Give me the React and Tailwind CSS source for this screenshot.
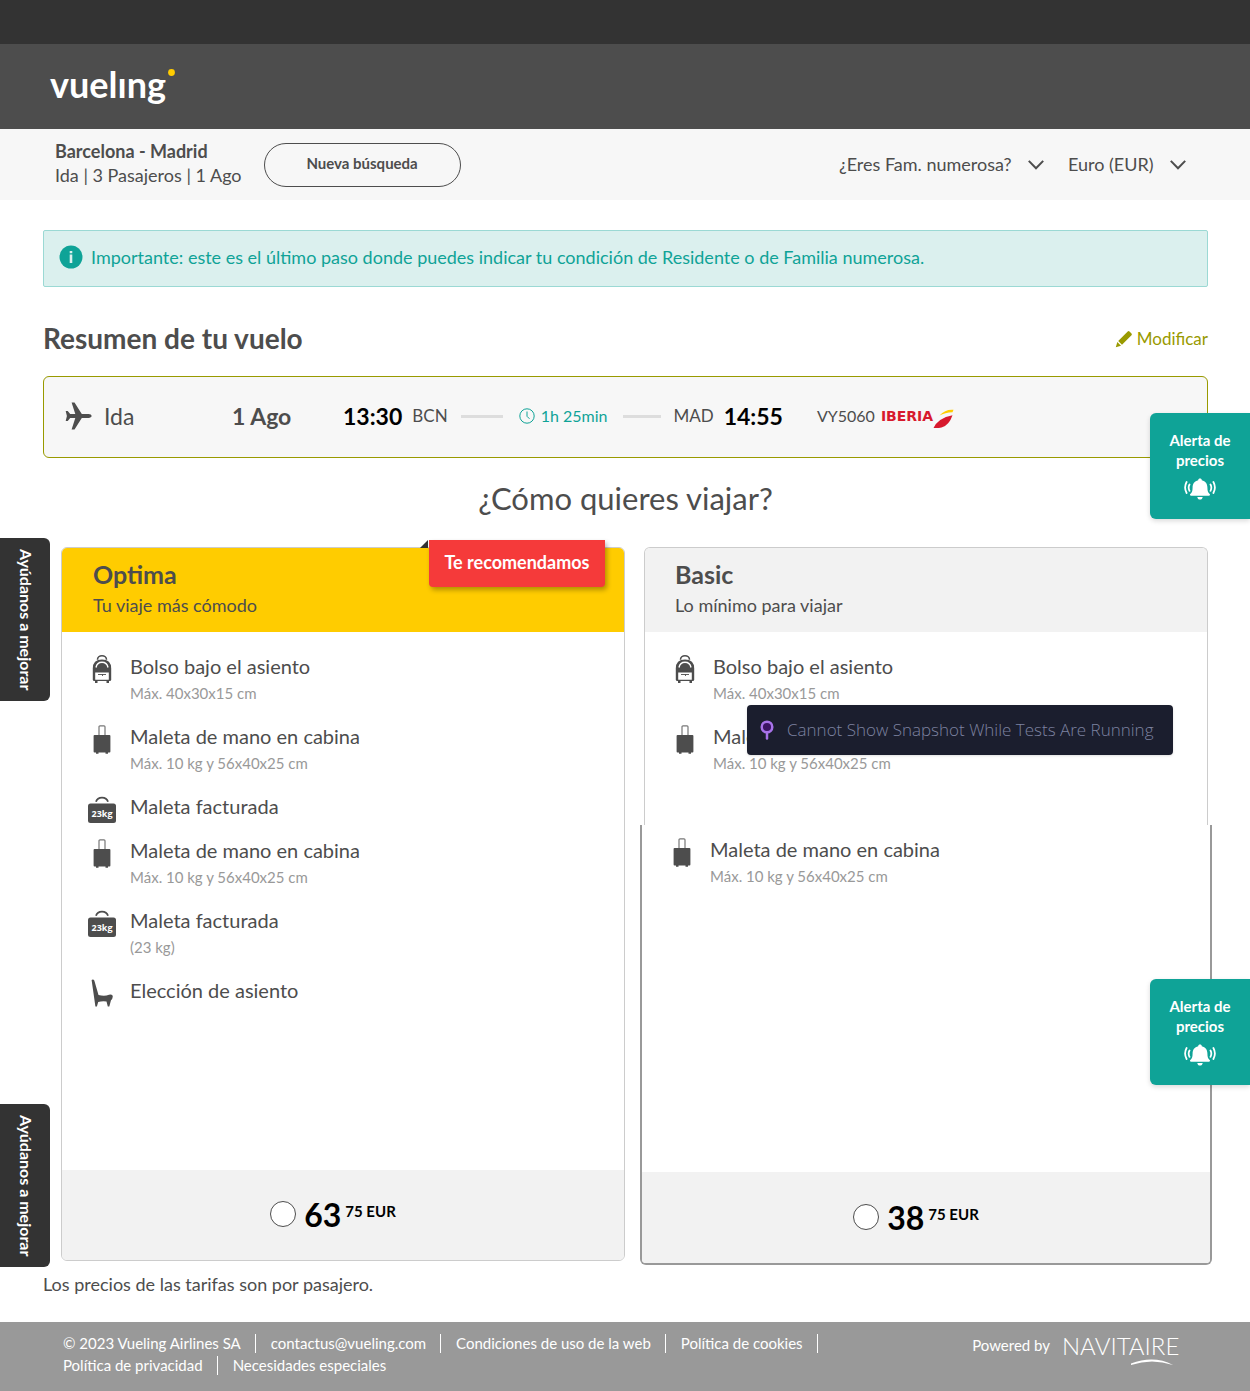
import React from "react";

const PlaneIcon = () => (
  <svg viewBox="0 0 27 28" className="h-7 w-[27px] shrink-0" fill="#4d4d4d" aria-hidden="true">
    <path d="M26.6 14c0 1-1.300 1.900-3 1.900h-6.800L9.500 27.400H6.600L10.300 15.900H5.200L2.700 19H.7L1.900 14 .7 9h2l2.500 3.100h5.100L6.600.6h2.900l7.300 11.500h6.800c1.700 0 3 .9 3 1.900z" />
  </svg>
);

const BackpackIcon = () => (
  <svg viewBox="0 0 20 28" className="h-7 w-5" fill="none" aria-hidden="true">
    <path d="M5.500 4.800a4.500 4 0 0 1 9 0" stroke="#4d4d4d" strokeWidth="1.600" />
    <path d="M.8 24.500V13.500Q.8 4.500 10 4.500t9.200 9v11q0 1.500-1.500 1.500H2.300Q.8 26 .8 24.500z" fill="#4d4d4d" />
    <path d="M4 12.500Q5 7.300 10 7.300t6 5.200" stroke="#fff" strokeWidth="1.400" />
    <path d="M3.200 17.500h13.600v6.800q0 .5-.5.500H3.700q-.5 0-.5-.5z" fill="#fff" />
    <path d="M6 19.500h8M10.500 19.500v1.500" stroke="#4d4d4d" strokeWidth=".9" />
    <path d="M3 25.500h2.500V28H3zM14.500 25.500H17V28h-2.500z" fill="#4d4d4d" />
  </svg>
);

const CabinBagIcon = () => (
  <svg viewBox="0 0 18 29" className="h-[29px] w-[18px]" aria-hidden="true">
    <path d="M6 10.500V1.800q0-1 1-1h4q1 0 1 1v8.700" fill="none" stroke="#777" strokeWidth="1.200" />
    <path d="M1.500 10h15q.9 0 .9.900v15.700q0 .9-.9.900h-15q-.9 0-.9-.9V10.900q0-.9.900-.9z" fill="#4d4d4d" />
    <path d="M3 27h2.500v1.700H3zM12.500 27H15v1.700h-2.500z" fill="#4d4d4d" />
  </svg>
);

const CheckedBagIcon = () => (
  <svg viewBox="0 0 28 28" className="h-7 w-7" aria-hidden="true">
    <path d="M8 6.800a6.200 5.600 0 0 1 12 0" fill="none" stroke="#4d4d4d" strokeWidth="1.800" />
    <rect x="0" y="8.500" width="28" height="19.500" rx="2.500" fill="#4d4d4d" />
    <text x="14" y="21.500" textAnchor="middle" fontFamily="Open Sans, sans-serif" fontSize="9" fontWeight="700" fill="#fff">
      23kg
    </text>
  </svg>
);

const SeatIcon = () => (
  <svg viewBox="0 0 22 28" className="h-7 w-[22px]" fill="#4d4d4d" aria-hidden="true">
    <path d="M.6.900q1.900-.9 2.700.7L7.500 16q6 1.500 10.500-.2 3.800-.8 3.800 1.700-.3 2.800-1.800 3.800L18.300 27.500h-1.500L15.500 22.500q-4-.8-8.300.5L5.900 27.500H4.400z" />
  </svg>
);

const BellIcon = () => (
  <svg viewBox="0 0 32 22" className="h-[22px] w-8" fill="none" stroke="#fff" strokeWidth="1.800" strokeLinecap="round" aria-hidden="true">
    <path
      d="M16 .5c1.100 0 1.800.7 1.800 1.700 3.700.8 5.600 3.700 5.600 7.300 0 3.800.8 5.200 2.300 6.600.7.700.2 1.700-.7 1.700H7c-.9 0-1.400-1-.7-1.700 1.500-1.400 2.300-2.800 2.300-6.600 0-3.600 1.900-6.500 5.600-7.300C14.200 1.200 14.900.5 16 .5zM13.300 18.900h5.400c-.2 1.600-1.300 2.600-2.700 2.600s-2.500-1-2.700-2.600z"
      fill="#fff"
      stroke="none"
    />
    <path d="M5.500 6.500Q3.800 9.500 5.500 12.800M2.600 4Q-.4 9.500 2.600 15M26.500 6.500Q28.200 9.500 26.500 12.800M29.400 4Q32.400 9.500 29.400 15" />
  </svg>
);

const icons = { backpack: BackpackIcon, cabin: CabinBagIcon, checked: CheckedBagIcon, seat: SeatIcon };

function Feature({ icon, title, detail }) {
  const Icon = icons[icon];
  return (
    <li className="flex gap-3 pb-4">
      <span className="flex h-7 w-8 shrink-0 justify-center pt-[3px]">
        <Icon />
      </span>
      <div>
        <p className="text-xl leading-7 text-[#4d4d4d]">{title}</p>
        {detail && <p className="text-[15px] leading-[26px] text-[#999]">{detail}</p>}
      </div>
    </li>
  );
}

function Price({ value, cents, label }) {
  return (
    <label className="flex h-[90px] items-center justify-center bg-[#f2f2f2] pr-5 pb-0.5 text-black">
      <input
        type="radio"
        name="fare"
        aria-label={label}
        className="mr-2 size-[26px] appearance-none rounded-full border border-[#4d4d4d] bg-white checked:border-8"
      />
      <span className="flex items-start gap-1">
        <span className="pt-0.5 text-[32px] leading-10 font-bold">{value}</span>
        <span className="pt-1.5 text-[15px] leading-6 font-bold">{cents}</span>
      </span>
    </label>
  );
}

function Dropdown({ label, options }) {
  return (
    <span className="grid items-center">
      <select
        aria-label={label}
        className="col-start-1 row-start-1 cursor-pointer appearance-none bg-transparent pr-8 pb-0.5 text-lg leading-6 text-[#4d4d4d]"
      >
        {options.map((o) => (
          <option key={o}>{o}</option>
        ))}
      </select>
      <svg viewBox="0 0 16 10" className="pointer-events-none col-start-1 row-start-1 h-[10px] w-4 justify-self-end" fill="none" stroke="#4d4d4d" strokeWidth="2" aria-hidden="true">
        <path d="M.8.9 8 8.300 15.200.9" />
      </svg>
    </span>
  );
}

function PriceAlert({ className }) {
  return (
    <button
      type="button"
      className={"absolute right-0 z-10 flex h-[106px] w-[100px] flex-col items-center rounded-l-md bg-[#0fa397] pt-[17px] text-[15px] leading-5 font-bold text-white shadow-[0_2px_5px_rgba(0,0,0,0.15)] " + className}
    >
      <span className="w-[70px]">Alerta de precios</span>
      <span className="mt-2">
        <BellIcon />
      </span>
    </button>
  );
}

function FeedbackTab({ className }) {
  return (
    <button
      type="button"
      className={"absolute left-0 z-10 flex h-[163px] w-[50px] items-center justify-center rounded-r-md bg-[#333] pl-0.5 text-base font-bold text-white [writing-mode:vertical-rl] " + className}
    >
      Ayúdanos a mejorar
    </button>
  );
}

const footerLinks = ["contactus@vueling.com", "Condiciones de uso de la web", "Política de cookies", "Política de privacidad", "Necesidades especiales"];

export default function App() {
  return (
    <div className="relative bg-white font-['Lato',sans-serif] text-[#4d4d4d]">
      <div className="h-11 bg-[#333]" />
      <header className="h-[85px] bg-[#4d4d4d] pl-[50px]">
        <a href="#" aria-label="vueling" className="flex items-start pt-3.5 text-white">
          <span className="text-4xl leading-[52px] font-bold">vuelıng</span>
          <svg viewBox="0 0 7 7" className="mt-[11px] ml-0.5 size-[7px]" aria-hidden="true">
            <circle cx="3.500" cy="3.500" r="3.400" fill="#fc0" />
          </svg>
        </a>
      </header>

      <div className="flex h-[71px] items-center bg-[#f7f7f7] pr-16 pl-[55px]">
        <div className="pb-[3px] text-lg leading-6">
          <p className="font-bold">Barcelona - Madrid</p>
          <p>Ida | 3 Pasajeros | 1 Ago</p>
        </div>
        <button type="button" className="ml-[22px] h-11 w-[197px] rounded-full border border-[#4d4d4d] pb-0.5 text-[15px] font-bold">
          Nueva búsqueda
        </button>
        <div className="ml-auto flex gap-6">
          <Dropdown label="Familia numerosa" options={["¿Eres Fam. numerosa?"]} />
          <Dropdown label="Moneda" options={["Euro (EUR)"]} />
        </div>
      </div>

      <main className="pt-[30px] pr-[42px] pb-[26px] pl-[43px]">
        <div className="flex h-[57px] items-center rounded-xs border border-[#9bd9d4] bg-[#dbf0ee] pb-[3px] pl-[15px] text-lg text-[#0fa397]">
          <svg viewBox="0 0 24 24" className="mr-2 size-6" aria-hidden="true">
            <circle cx="12" cy="12" r="11.500" fill="#0fa397" />
            <path d="M10.700 9.500h2.600V18h-2.600zM10.700 6h2.600v2.300h-2.600z" fill="#dbf0ee" />
          </svg>
          Importante: este es el último paso donde puedes indicar tu condición de Residente o de Familia numerosa.
        </div>

        <div className="mt-[31px] flex items-center justify-between">
          <h2 className="text-[28px] leading-10 font-bold">Resumen de tu vuelo</h2>
          <a href="#" className="flex items-center pt-0.5 text-[17px] text-[#999a00]">
            <svg viewBox="0 0 18 18" className="mr-1 size-[18px]" fill="#999a00" aria-hidden="true">
              <path d="M.8 17.200 2.300 12l3.700 3.700zM3.200 11 12.700 1.500q.9-.8 1.800 0l2 2q.8.9 0 1.800L7 14.800z" />
            </svg>
            Modificar
          </a>
        </div>

        <section className="mt-[18px] flex h-[82px] items-center rounded-md border border-[#999a00] bg-[#f7f7f7] pb-0.5 pl-[21px]">
          <div className="flex w-[167px] items-center gap-3 text-[23px]">
            <PlaneIcon />
            Ida
          </div>
          <div className="w-[111px] text-[23px] font-bold">1 Ago</div>
          <div className="flex items-center">
            <span className="text-[23px] font-bold text-black">13:30</span>
            <span className="ml-[10px] text-[17px]">BCN</span>
            <span className="mr-4 ml-[13px] h-[3px] w-[42px] bg-[#ddd]" />
            <span className="flex items-center text-base text-[#0fa397]">
              <svg viewBox="0 0 16 16" className="mr-1.5 size-4" fill="none" stroke="#0fa397" aria-hidden="true">
                <circle cx="8" cy="8" r="7.200" />
                <path d="M8 3.500v4.800l2.500 2.500" />
              </svg>
              1h 25min
            </span>
            <span className="ml-4 h-[3px] w-[38px] bg-[#ddd]" />
            <span className="ml-3 text-[17px]">MAD</span>
            <span className="ml-2.5 text-[23px] font-bold text-black">14:55</span>
          </div>
          <span className="ml-[34px] text-base">VY5060</span>
          <span className="ml-1.5 flex items-center" aria-label="Iberia">
            <span className="font-['DejaVu_Sans'] text-sm font-bold text-[#d7192d]">IBERIA</span>
            <svg viewBox="0 0 21 20" className="mt-1.5 h-5 w-[21px]" aria-hidden="true">
              <path d="M.5 19Q5 9 19.500 6.200 16 16.500 8.500 18.500 5 19.300.5 19z" fill="#d7192d" />
              <path d="M6.500 6.500Q12.500 0 20.500.8L19.500 3.300Q12 3.500 6.500 6.500z" fill="#fc0" />
            </svg>
          </span>
        </section>

        <h1 className="mt-[18px] text-center text-[31px] leading-[44px]">¿Cómo quieres viajar?</h1>

        <div className="mt-[27px] ml-[18px] grid grid-cols-2 items-start gap-[19px]">
          <article className="relative rounded-md border border-[#ccc]">
            <div className="h-[84px] rounded-t-[5px] bg-[#fc0] pt-2 pl-[31px]">
              <h3 className="text-[25px] leading-[37px] font-bold">Optima</h3>
              <p className="text-lg leading-6">Tu viaje más cómodo</p>
            </div>
            <div className="absolute -top-2 right-[19px] h-[47px] w-44 rounded-b bg-[#f53a3a] text-center text-lg leading-[45px] font-bold text-white shadow-[2px_3px_5px_rgba(0,0,0,0.3)]">
              Te recomendamos
              <svg viewBox="0 0 8 8" className="absolute top-0 -left-[9px] size-2" aria-hidden="true">
                <path d="M8 0v8H0z" fill="#333" />
              </svg>
            </div>
            <ul className="h-[538px] pt-5 pl-6">
              <Feature icon="backpack" title="Bolso bajo el asiento" detail="Máx. 40x30x15 cm" />
              <Feature icon="cabin" title="Maleta de mano en cabina" detail="Máx. 10 kg y 56x40x25 cm" />
              <Feature icon="checked" title="Maleta facturada" />
              <Feature icon="cabin" title="Maleta de mano en cabina" detail="Máx. 10 kg y 56x40x25 cm" />
              <Feature icon="checked" title="Maleta facturada" detail="(23 kg)" />
              <Feature icon="seat" title="Elección de asiento" />
            </ul>
            <div className="overflow-hidden rounded-b-[5px]">
              <Price value="63" cents="75 EUR" label="Optima 63,75 EUR" />
            </div>
          </article>

          <article>
            <div className="relative h-[278px] rounded-t-md border border-b-0 border-[#ccc]">
              <div className="h-[84px] rounded-t-[5px] bg-[#f2f2f2] pt-2 pl-[30px]">
                <h3 className="text-[25px] leading-[37px] font-bold">Basic</h3>
                <p className="text-lg leading-6">Lo mínimo para viajar</p>
              </div>
              <ul className="pt-5 pl-6">
                <Feature icon="backpack" title="Bolso bajo el asiento" detail="Máx. 40x30x15 cm" />
                <Feature icon="cabin" title="Maleta de mano en cabina" detail="Máx. 10 kg y 56x40x25 cm" />
              </ul>
              <div
                role="status"
                className="absolute top-[157px] right-[34px] flex h-[50px] w-[426px] items-center rounded bg-[#1b1e2e] pl-[13px] font-['Open_Sans'] text-[17px] font-light whitespace-nowrap text-[#7d82a0] shadow"
              >
                <svg viewBox="0 0 14 20" className="mr-[13px] h-5 w-[14px]" aria-hidden="true">
                  <path d="M7 12v6.500" stroke="#a772e8" strokeWidth="2.500" strokeLinecap="round" />
                  <circle cx="7" cy="7" r="5.300" fill="#3b1463" stroke="#a772e8" strokeWidth="2.500" />
                </svg>
                Cannot Show Snapshot While Tests Are Running
              </div>
            </div>
            <div className="-mx-1 rounded-b-md border-2 border-t-0 border-[#999]">
              <ul className="h-[347px] pt-2.5 pl-6">
                <Feature icon="cabin" title="Maleta de mano en cabina" detail="Máx. 10 kg y 56x40x25 cm" />
              </ul>
              <div className="overflow-hidden rounded-b bg-[#f2f2f2] pt-px">
                <Price value="38" cents="75 EUR" label="Basic 38,75 EUR" />
              </div>
            </div>
          </article>
        </div>

        <p className="mt-[7px] text-lg leading-6">Los precios de las tarifas son por pasajero.</p>
      </main>

      <footer className="flex h-[69px] items-start justify-between bg-[#999] pt-3 pr-[62px] pl-[63px] text-[15px] text-white">
        <ul className="flex max-w-[800px] flex-wrap gap-x-[15px] gap-y-[3px] leading-[19px]">
          <li className="border-r border-white pr-3.5">© 2023 Vueling Airlines SA</li>
          {footerLinks.map((text, i) => (
            <li key={text} className={i < footerLinks.length - 1 ? "border-r border-white pr-3.5" : ""}>
              <a href="#">{text}</a>
            </li>
          ))}
        </ul>
        <div className="flex items-start gap-3">
          <span>Powered by</span>
          <span className="w-[126px]">
            <span className="block text-2xl leading-6 font-light">NAVITAIRE</span>
            <svg viewBox="0 0 44 8" className="ml-[68px] h-2 w-11" aria-hidden="true">
              <path d="M1 5.500Q24-3 43 7 22 0 1 7z" fill="#fff" />
            </svg>
          </span>
        </div>
      </footer>

      <PriceAlert className="top-[413px]" />
      <PriceAlert className="top-[979px]" />
      <FeedbackTab className="top-[538px]" />
      <FeedbackTab className="top-[1104px]" />
    </div>
  );
}
